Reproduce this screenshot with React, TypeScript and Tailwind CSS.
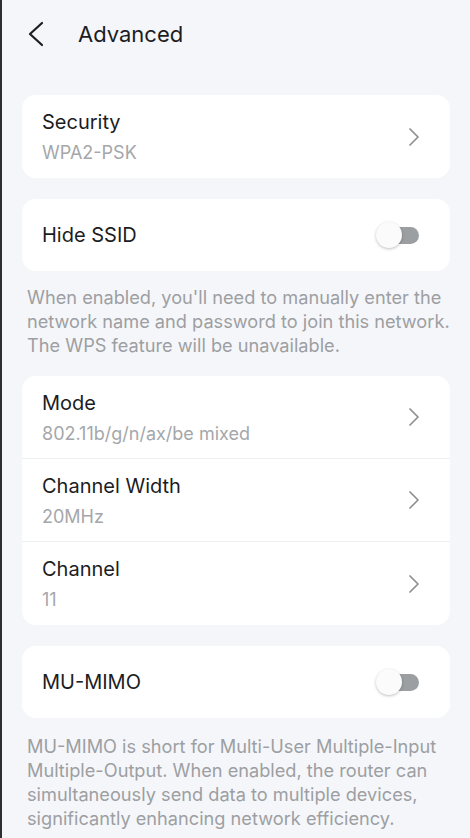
type NavRow = { title: string; value: string };

const radioRows: NavRow[] = [
  { title: "Mode", value: "802.11b/g/n/ax/be mixed" },
  { title: "Channel Width", value: "20MHz" },
  { title: "Channel", value: "11" },
];

function Toggle() {
  return (
    <div className="relative h-[26px] w-[44px] shrink-0">
      <div className="absolute left-[9px] top-[4.5px] h-[17px] w-[34px] rounded-full bg-[#9c9fa1]" />
      <div className="absolute left-0 top-0 h-[26px] w-[26px] rounded-full bg-[#fbfbfb] shadow-[0_1px_3px_rgba(0,0,0,0.25)]" />
    </div>
  );
}

function Chevron() {
  return (
    <svg width="12" height="20" viewBox="0 0 12 20" fill="none" className="shrink-0">
      <polyline points="2,2 10,10 2,18" stroke="#8c8e92" strokeWidth="1.7" strokeLinecap="round" strokeLinejoin="round" />
    </svg>
  );
}

function Row({ title, value }: NavRow) {
  return (
    <div className="flex h-[83px] items-center justify-between pl-[20px] pr-[30px]">
      <div className="flex flex-col">
        <span className="text-[20px] leading-[28px] text-[#1c1d1f]">{title}</span>
        <span className="mt-[5px] text-[18px] leading-[24px] text-[#a5a7aa]">{value}</span>
      </div>
      <Chevron />
    </div>
  );
}

export default function App() {
  return (
    <div
      className="min-h-[838px] w-[470px] border-l-2 border-[#2f2f2f] bg-[#f5f6fa]"
      style={{ fontFamily: 'Inter, "Noto Sans", sans-serif' }}
    >
      <div className="flex h-[68px] items-center pl-[25px]">
        <svg width="18" height="28" viewBox="0 0 18 28" fill="none">
          <polyline points="15,3 3,14 15,25" stroke="#1c1d1f" strokeWidth="2.2" strokeLinecap="round" strokeLinejoin="round" />
        </svg>
        <h1 className="ml-[33px] text-[22px] text-[#1c1d1f]">Advanced</h1>
      </div>

      <div className="px-[20px] pt-[27px]">
        <div className="overflow-hidden rounded-[14px] bg-white">
          <Row title="Security" value="WPA2-PSK" />
        </div>

        <div className="mt-[21px] flex h-[72px] items-center justify-between rounded-[14px] bg-white pl-[20px] pr-[30px]">
          <span className="text-[20px] text-[#1c1d1f]">Hide SSID</span>
          <Toggle />
        </div>

        <p className="mr-[-8px] pl-[5px] pt-[14px] text-[18.2px] leading-[24px] text-[#9d9fa2]">
          When enabled, you'll need to manually enter the network name and password to join this network. The WPS feature will be unavailable.
        </p>

        <div className="mt-[19px] divide-y divide-[#eeeff2] overflow-hidden rounded-[14px] bg-white">
          {radioRows.map((r) => (
            <Row key={r.title} title={r.title} value={r.value} />
          ))}
        </div>

        <div className="mt-[21px] flex h-[72px] items-center justify-between rounded-[14px] bg-white pl-[20px] pr-[30px]">
          <span className="text-[20px] text-[#1c1d1f]">MU-MIMO</span>
          <Toggle />
        </div>

        <p className="mr-[-8px] pl-[5px] pt-[16px] text-[18.2px] leading-[24px] text-[#9d9fa2]">
          MU-MIMO is short for Multi-User Multiple-Input Multiple-Output. When enabled, the router can simultaneously send data to multiple devices, significantly enhancing network efficiency.
        </p>
      </div>
    </div>
  );
}
